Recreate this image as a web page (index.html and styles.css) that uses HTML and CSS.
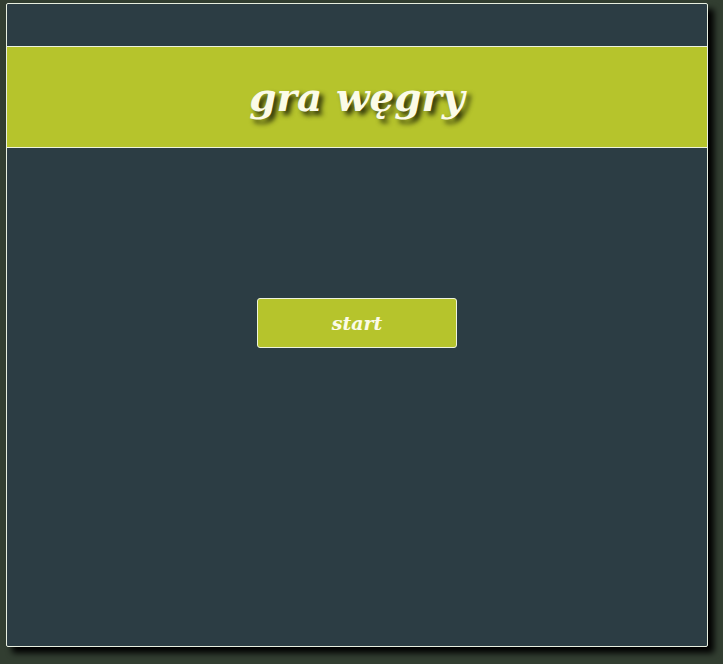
FILE: index.html
```html
<!DOCTYPE html>
<html lang="pl">
<head>
<meta charset="utf-8">
<title>gra węgry</title>
<link rel="stylesheet" href="styles.css">
</head>
<body>
<div class="frame">
  <header class="banner">
    <h1 class="title">gra węgry</h1>
  </header>
  <div class="actions">
    <button class="start" type="button">start</button>
  </div>
</div>
</body>
</html>
```
FILE: styles.css
```css
html, body {
  margin: 0;
  padding: 0;
  background: #323e31;
  height: 100%;
}
body {
  padding: 3px 0 0 6px;
  box-sizing: border-box;
  font-family: "DejaVu Serif", Georgia, serif;
}
.frame {
  width: 700px;
  height: 642px;
  border: 1px solid #e8efe0;
  border-radius: 2px;
  background: #2c3d44;
  box-shadow: 6px 6px 6px #000;
}
.banner {
  margin-top: 42px;
  height: 100px;
  background: #b6c42c;
  border-top: 1px solid #eef3dc;
  border-bottom: 1px solid #eef3dc;
  display: flex;
  align-items: center;
  justify-content: center;
}
.title {
  margin: 0;
  color: #fbfbe8;
  font-size: 39px;
  font-style: italic;
  font-weight: bold;
  text-shadow: 4px 4px 5px #2e3309;
}
.actions {
  display: flex;
  justify-content: center;
  margin-top: 150px;
}
.start {
  width: 200px;
  height: 50px;
  background: #b6c42c;
  border: 1px solid #eef3dc;
  border-radius: 3px;
  color: #fbfbe8;
  font-family: "DejaVu Serif", Georgia, serif;
  font-size: 19px;
  font-style: italic;
  font-weight: bold;
  padding: 0;
}
```
